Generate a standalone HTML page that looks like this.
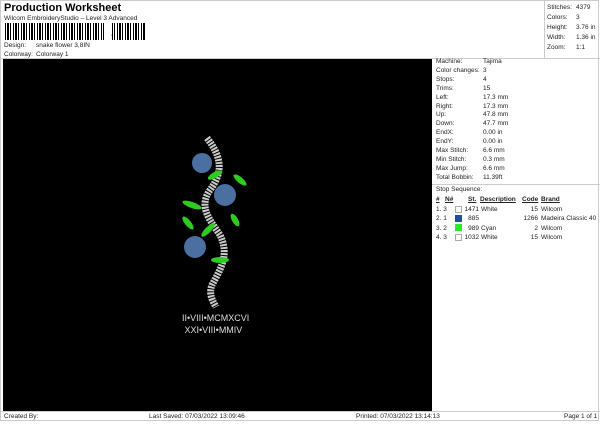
<!DOCTYPE html><html><head><style>
body{margin:0;width:600px;height:424px;background:#fff;font-family:"Liberation Sans",sans-serif;font-size:6.5px;color:#222;position:relative;overflow:hidden}
.a{position:absolute;white-space:nowrap}
.bc{position:absolute;left:5px;top:23px;width:140px;height:17px;background:repeating-linear-gradient(90deg,#000 0 1px,#fff 1px 2px,#000 2px 4px,#fff 4px 5px,#000 5px 6px,#fff 6px 8px)}
</style></head><body>
<div class="a" style="left:0;top:0;width:599px;height:421px;border:1px solid #ccc;box-sizing:border-box"></div>
<div class="a" style="left:4px;top:2px;font-size:11px;font-weight:bold;color:#000">Production Worksheet</div>
<div class="a" style="left:4px;top:15px">Wilcom EmbroideryStudio – Level 3 Advanced</div>
<div class="bc"></div>
<div class="a" style="left:104px;top:23px;width:8px;height:17px;background:#fff"></div>
<div class="a" style="left:111px;top:28px;font-size:10px;font-weight:bold;color:#000">,</div>
<div class="a" style="left:4px;top:42px">Design:</div><div class="a" style="left:36px;top:42px">snake flower 3,8IN</div>
<div class="a" style="left:4px;top:51px">Colorway:</div><div class="a" style="left:36px;top:51px">Colorway 1</div>
<div class="a" style="left:544px;top:0;width:1px;height:59px;background:#ccc"></div>
<div class="a" style="left:0;top:58px;width:600px;height:1px;background:#ccc"></div>
<div class="a" style="left:547px;top:3px;line-height:10px">Stitches:<br>Colors:<br>Height:<br>Width:<br>Zoom:</div>
<div class="a" style="left:576px;top:3px;line-height:10px">4379<br>3<br>3.76 in<br>1.36 in<br>1:1</div>
<div class="a" style="left:3px;top:59px;width:429px;height:353px;background:#000"></div>
<svg class="a" style="left:180px;top:135px" width="80" height="175" viewBox="0 0 80 175">
<path d="M27 3 C40 20 45 35 30 55 C18 72 30 85 40 100 C50 120 40 135 32 150 C28 160 34 168 36 172" stroke="#ccc" stroke-width="7" fill="none" stroke-dasharray="2 1"/>
<g fill="#4a6fa0"><circle cx="22" cy="28" r="10"/><circle cx="45" cy="60" r="11"/><circle cx="15" cy="112" r="11"/></g>
<g fill="#2ecc20"><ellipse cx="35" cy="40" rx="8" ry="3" transform="rotate(-30 35 40)"/><ellipse cx="12" cy="70" rx="10" ry="3" transform="rotate(20 12 70)"/><ellipse cx="60" cy="45" rx="8" ry="3" transform="rotate(40 60 45)"/><ellipse cx="28" cy="95" rx="9" ry="3" transform="rotate(-45 28 95)"/><ellipse cx="55" cy="85" rx="7" ry="3" transform="rotate(60 55 85)"/><ellipse cx="40" cy="125" rx="9" ry="3"/><ellipse cx="8" cy="88" rx="8" ry="3" transform="rotate(50 8 88)"/></g>
</svg>
<div class="a" style="left:182px;top:312px;font-size:9px;color:#ddd;line-height:12px">II•VIII•MCMXCVI<br>&nbsp;XXI•VIII•MMIV</div>
<div class="a" style="left:436px;top:58px;line-height:8.9px">Machine:<br>Color changes:<br>Stops:<br>Trims:<br>Left:<br>Right:<br>Up:<br>Down:<br>EndX:<br>EndY:<br>Max Stitch:<br>Min Stitch:<br>Max Jump:<br>Total Bobbin:</div>
<div class="a" style="left:483px;top:58px;line-height:8.9px">Tajima<br>3<br>4<br>15<br>17.3 mm<br>17.3 mm<br>47.8 mm<br>47.7 mm<br>0.00 in<br>0.00 in<br>6.6 mm<br>0.3 mm<br>6.6 mm<br>11.39ft</div>
<div class="a" style="left:432px;top:184px;width:168px;height:1px;background:#ccc"></div>
<div class="a" style="left:436px;top:186px">Stop Sequence:</div>
<div class="a" style="left:436px;top:196px;font-weight:bold;text-decoration:underline">#</div>
<div class="a" style="left:445px;top:196px;font-weight:bold;text-decoration:underline">N#</div>
<div class="a" style="left:468px;top:196px;font-weight:bold;text-decoration:underline">St.</div>
<div class="a" style="left:480px;top:196px;font-weight:bold;text-decoration:underline">Description</div>
<div class="a" style="left:522px;top:196px;font-weight:bold;text-decoration:underline">Code</div>
<div class="a" style="left:541px;top:196px;font-weight:bold;text-decoration:underline">Brand</div>
<div class="a" style="left:436px;top:205px;line-height:9.3px">1. 3<br>2. 1<br>3. 2<br>4. 3</div>
<div class="a" style="left:455px;top:206px;width:5px;height:5px;border:1px solid #aaa"></div>
<div class="a" style="left:455px;top:215px;width:7px;height:7px;background:#1f4f99"></div>
<div class="a" style="left:455px;top:224px;width:7px;height:7px;background:#22ee22"></div>
<div class="a" style="left:455px;top:234px;width:5px;height:5px;border:1px solid #aaa"></div>
<div class="a" style="left:462px;top:205px;line-height:9.3px;text-align:right;width:17px">1471<br>885<br>989<br>1032</div>
<div class="a" style="left:481px;top:205px;line-height:9.3px">White<br><br>Cyan<br>White</div>
<div class="a" style="left:515px;top:205px;line-height:9.3px;text-align:right;width:23px">15<br>1266<br>2<br>15</div>
<div class="a" style="left:541px;top:205px;line-height:9.3px">Wilcom<br>Madeira Classic 40<br>Wilcom<br>Wilcom</div>
<div class="a" style="left:0;top:411px;width:600px;height:1px;background:#ccc"></div>
<div class="a" style="left:4px;top:413px">Created By:</div>
<div class="a" style="left:149px;top:413px">Last Saved: 07/03/2022 13:09:46</div>
<div class="a" style="left:356px;top:413px">Printed: 07/03/2022 13:14:13</div>
<div class="a" style="left:564px;top:413px">Page 1 of 1</div>
</body></html>
